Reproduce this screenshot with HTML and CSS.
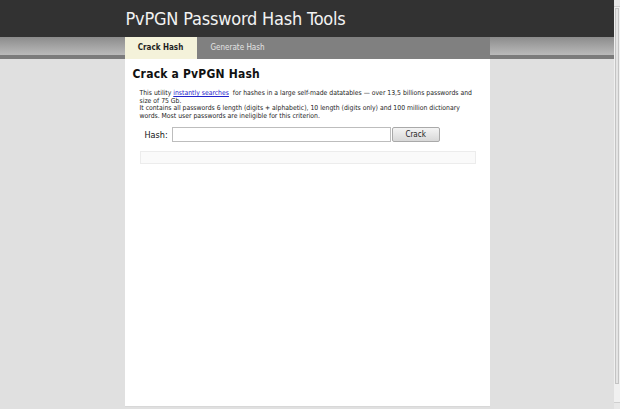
FILE: index.html
```html
<!DOCTYPE html>
<html lang="en">
<head>
    <meta charset="UTF-8">
    <title>PvPGN Password Hash Tools</title>
    <link rel="stylesheet" href="styles.css">
</head>
<body>

    <div class="page">
        <!-- Header -->
        <div class="header">
            <div class="wrap">
                <h1 class="site-title">PvPGN Password Hash Tools</h1>
            </div>
        </div>

        <!-- Tabs -->
        <div class="nav">
            <div class="wrap nav-inner">
                <a class="tab active" href="#">Crack Hash</a>
                <a class="tab" href="#">Generate Hash</a>
            </div>
        </div>

        <!-- Content -->
        <div class="wrap main">
            <h2>Crack a PvPGN Hash</h2>
            <p class="intro">
                This utility <a href="#">instantly searches</a>&nbsp; for hashes in a large self-made datatables &mdash; over 13,5 billions passwords and<br>
                size of 75 Gb.<br>
                It contains all passwords 6 length (digits + alphabetic), 10 length (digits only) and 100 million dictionary<br>
                words. Most user passwords are ineligible for this criterion.
            </p>

            <form class="hash-form" onsubmit="return false;">
                <label for="hash">Hash:</label>
                <input type="text" id="hash">
                <button type="submit">Crack</button>
            </form>

            <div class="result"></div>
        </div>
    </div>

    <!-- Fake window scrollbar -->
    <div class="scrollbar">
        <div class="scroll-arrow"></div>
        <div class="scroll-thumb"></div>
        <div class="scroll-arrow bottom"></div>
    </div>

</body>
</html>
```

FILE: styles.css
```css
/* Basic Reset */
* {
    margin: 0;
    padding: 0;
    box-sizing: border-box;
}

body {
    font-family: "DejaVu Sans Condensed", "DejaVu Sans", sans-serif;
    background: #e0e0e0;
    height: 409px;
    overflow: hidden;
}

.page {
    margin-right: 6px;
}

.wrap {
    width: 365px;
    margin: 0 auto;
}

/* Header */
.header {
    background: #323232;
    height: 37px;
}

.site-title {
    font-weight: normal;
    font-size: 18px;
    letter-spacing: -0.2px;
    color: #f2f2f2;
    line-height: 37px;
    padding-left: 1px;
}

/* Tabs */
.nav {
    height: 22px;
    background: linear-gradient(#8c8c8c 0, #bababa 18px, #7b7b7b 18px);
}

.nav-inner {
    height: 22px;
    background: #808080;
    display: flex;
    align-items: stretch;
}

.tab {
    font-size: 8px;
    color: #e4e4e4;
    text-decoration: none;
    display: flex;
    align-items: center;
    padding: 0 14px 2px;
}

.tab.active {
    background: #f4f2da;
    color: #1e1e1e;
    font-weight: bold;
    width: 72px;
    justify-content: center;
    padding: 0 0 2px;
}

/* Main panel */
.main {
    background: #fff;
    height: 348px;
    border-bottom: 1px solid #d8d8d8;
    padding: 8px 14px 0 8px;
}

h2 {
    font-size: 12px;
    color: #111;
    margin-bottom: 9px;
    letter-spacing: 0.2px;
}

.intro {
    font-size: 6.8px;
    line-height: 7.5px;
    color: #222;
    padding-left: 7px;
    white-space: nowrap;
}

.intro a {
    color: #2222cc;
}

.hash-form {
    display: flex;
    align-items: center;
    margin: 7px 0 0 12px;
}

.hash-form label {
    font-size: 9px;
    color: #111;
    margin-right: 4px;
}

.hash-form input {
    width: 219px;
    height: 15px;
    border: 1px solid #bdbdbd;
    outline: none;
}

.hash-form button {
    width: 48px;
    height: 15px;
    margin-left: 1px;
    border: 1px solid #a9a9a9;
    border-radius: 2px;
    background: linear-gradient(#f4f4f4, #d8d8d8);
    font-family: inherit;
    font-size: 8px;
    color: #222;
}

.result {
    margin: 9px 0 0 7px;
    height: 13px;
    background: #fafafa;
    border: 1px solid #ececec;
}

/* Fake window scrollbar */
.scrollbar {
    position: fixed;
    top: 0;
    right: 0;
    width: 6px;
    height: 409px;
    background: #f0f0f0;
    display: flex;
    flex-direction: column;
}

.scroll-arrow {
    height: 7px;
    background: #e8e8e8;
    border-bottom: 1px solid #cfcfcf;
}

.scroll-arrow.bottom {
    margin-top: auto;
    border-bottom: none;
    border-top: 1px solid #cfcfcf;
}

.scroll-thumb {
    height: 376px;
    margin: 1px 1px 0;
    background: #e4e4e4;
    border: 1px solid #c4c4c4;
}
```
